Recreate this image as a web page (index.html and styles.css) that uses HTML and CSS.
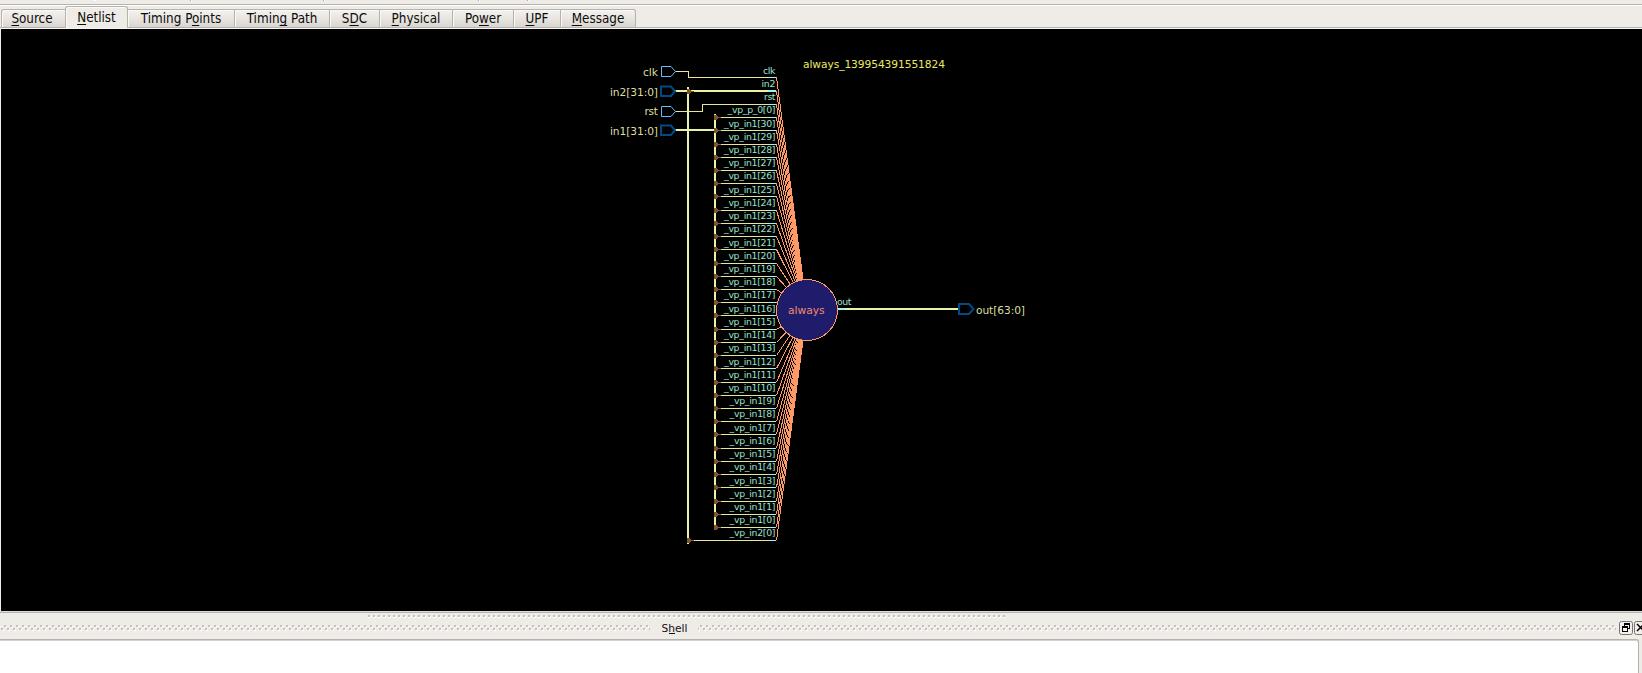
FILE: index.html
```
<!DOCTYPE html>
<html lang="en">
<head>
<meta charset="utf-8">
<title>Netlist</title>
<link rel="stylesheet" href="styles.css">
</head>
<body>
<div class="app">
  <div class="toolbar"><svg width="1642" height="6" shape-rendering="crispEdges"><path class="tick" d="M190.5 0v1M323.5 0v1M478.5 0v1M527.5 0v1"/><path class="lite" d="M94 .5h2M191.5 0v1M324.5 0v1M479.5 0v1M528.5 0v1"/></svg></div>
  <nav class="tabs">
    <div class="tab t-source"><span><u>S</u>ource</span></div>
    <div class="tab t-netlist active"><span><u>N</u>etlist</span></div>
    <div class="tab t-points"><span>Timing P<u>o</u>ints</span></div>
    <div class="tab t-path"><span>Timin<u>g</u> Path</span></div>
    <div class="tab t-sdc"><span>S<u>D</u>C</span></div>
    <div class="tab t-physical"><span><u>P</u>hysical</span></div>
    <div class="tab t-power"><span>Po<u>w</u>er</span></div>
    <div class="tab t-upf"><span><u>U</u>PF</span></div>
    <div class="tab t-message"><span><u>M</u>essage</span></div>
  </nav>
  <main class="canvas">
    <svg id="netlist" width="1641" height="582" viewBox="1 29 1641 582"></svg>
  </main>
  <div class="splitter">
    <svg width="1642" height="5" shape-rendering="crispEdges">
      <defs><pattern id="grip" width="5" height="5" patternUnits="userSpaceOnUse" x="368" y="1"><rect width="2" height="2" fill="#c4c1bc"/><path d="M0 2.5h2M2.5 1v2" stroke="#fff"/></pattern></defs>
      <rect x="368" y="1" width="637" height="4" fill="url(#grip)"/>
    </svg>
  </div>
  <header class="dock">
    <svg width="1642" height="20" shape-rendering="crispEdges">
      <defs><pattern id="zig" width="6" height="6" patternUnits="userSpaceOnUse" x="0" y="5"><rect x="4" y="0" width="2" height="2" fill="#c4c1bc"/><rect x="1" y="3" width="2" height="2" fill="#c4c1bc"/><path d="M5 2.5h1M0 1.5h1M2 5.5h2M3.5 4v1" stroke="#fff"/></pattern></defs>
      <rect x="0" y="5" width="650" height="6" fill="url(#zig)"/>
      <rect x="698" y="5" width="918" height="6" fill="url(#zig)"/>
      <text class="dock-title" x="661.5" y="12" textLength="26">S<tspan class="mnemonic">h</tspan>ell</text>
      <path d="M669 13.5h6" stroke="#111"/>
    </svg>
    <svg class="dock-buttons" width="24" height="15" viewBox="1618 620 24 15">
      <rect class="button" x="1619.5" y="621.5" width="13" height="13" rx="2"/>
      <rect class="button" x="1634.5" y="621.5" width="13" height="13" rx="2"/>
      <g shape-rendering="crispEdges" fill="none" stroke="#000"><path d="M1624.5 626v-2.500h5v5h-2M1624 624.500h6M1622.500 626.500h5v5h-5zM1622 627.500h6"/></g>
      <path d="M1637 624l7 7M1637 631l7-7" stroke="#000" stroke-width="1.5"/>
    </svg>
  </header>
  <section class="shell"></section>
</div>
<script src="netlist.js"></script>
</body>
</html>
```
FILE: styles.css
```
body { margin: 0; overflow: hidden; background: #efebe7; }
.app { display: flex; flex-direction: column; width: 1642px; height: 673px; overflow: hidden; }
svg { display: block; }
.toolbar { height: 4px; border-bottom: 1px solid #b5b2ae; box-shadow: 0 1px #fff; }
.tick { stroke: #aaa6a2; }
.lite { stroke: #fff; }
.tabs {
  display: flex; align-items: flex-end; height: 22px; padding-left: 1px; margin-top: 0;
  border-bottom: 1px solid #b5b2ae;
  font: 13.33px "DejaVu Sans Condensed", "DejaVu Sans", sans-serif;
  font-stretch: condensed; color: #0c0c0c;
}
.tab {
  box-sizing: border-box; height: 18px; display: flex; justify-content: center; align-items: center;
  border-top: 1px solid #b5b2ae; border-right: 1px solid #b5b2ae;
  background: linear-gradient(#f4f2ef, #eae7e3 45%, #d9d5d0);
  box-shadow: inset 1px 1px #faf9f8; white-space: nowrap; line-height: 16px;
}
.tab u { text-decoration-thickness: 1px; text-underline-offset: 2px; text-decoration-skip-ink: none; }
.active {
  height: 22px; margin-bottom: -1px; border-left: 1px solid #b5b2ae;
  border-radius: 3px 3px 0 0; background: #efebe7; padding: 2px 0 1px;
}
.t-source { width: 64px; border-left: 1px solid #b5b2ae; border-right: 0; border-radius: 3px 0 0 0; padding-right: 3px; }
.t-netlist { width: 63px; }
.t-points { width: 107px; }
.t-path { width: 95px; }
.t-sdc { width: 50px; }
.t-physical { width: 73px; }
.t-power { width: 61px; }
.t-upf { width: 47px; }
.t-message { width: 75px; border-radius: 0 3px 0 0; }
.canvas { height: 582px; margin-left: 1px; border-top: 1px solid #f8f6f4; background: #000; }
.splitter { height: 6px; border-top: 1px solid #dedbd7; box-shadow: inset 0 1px #b5b2ae; padding-top: 2px; }
.dock { display: flex; height: 19px; }
.dock-title { font: 10.67px "DejaVu Sans", sans-serif; fill: #111; }
.dock-buttons { margin-left: -24px; flex: none; }
.button { fill: #f1eeeb; stroke: #77736f; }
.shell { flex: 1; margin-right: 3px; border-top: 1px solid #b5b2ae; border-right: 1px solid #b5b2ae; box-shadow: inset 0 1px #d5d2ce; background: #fff; border-radius: 0 3px 0 0; }
#netlist text { font-family: "DejaVu Sans", sans-serif; }
#netlist .pin { font-size: 9.33px; fill: #9ce2cd; }
#netlist .port { font-size: 10.67px; fill: #dede9f; }
#netlist .title { font-size: 10.67px; fill: #eaea66; }
#netlist .block { font-size: 10.67px; fill: #f08c6c; }
.wire { fill: none; stroke: #e6e696; }
.bus { fill: none; stroke: #eaf2aa; stroke-width: 2; }
.stub { stroke: #a0f4f0; }
.wide { stroke-width: 2; }
.fan { stroke: #ff9966; }
.circle { fill: #1f1c6b; stroke: #ff9966; }
.tap { fill: #7e5436; }
.port-in { fill: #000; stroke: #6cb8fa; }
.port-bus { fill: #000; stroke: #004a85; stroke-width: 2; }
```
FILE: netlist.js
```
const NS = "http://www.w3.org/2000/svg";
const root = document.getElementById("netlist");

function add(tag, attrs, text) {
  const el = document.createElementNS(NS, tag);
  for (const k in attrs) el.setAttribute(k, attrs[k]);
  if (text) el.textContent = text;
  root.appendChild(el);
}
function line(cls, d) {
  add("path", { class: cls, d: d, "shape-rendering": "crispEdges" });
}
function label(cls, x, y, text, anchor, len) {
  const a = { class: cls, x: x, y: y, "text-anchor": anchor };
  if (len) { a.textLength = len; a.lengthAdjust = "spacing"; }
  add("text", a, text);
}

// Pin rows, top to bottom
const rows = [77, 91, 104, 117, 130, 144, 157, 170, 183, 196, 210, 223, 236, 249, 263, 276, 289, 302,
  315, 329, 342, 355, 368, 382, 395, 408, 421, 434, 448, 461, 474, 487, 501, 514, 527, 540];
const names = ["clk", "in2", "rst", "_vp_p_0[0]"];
for (let b = 30; b >= 0; b--) names.push("_vp_in1[" + b + "]");
names.push("_vp_in2[0]");

// Fan-in to the process block
rows.forEach(y => line("fan", "M776.5 " + (y + 0.5) + "L807 310"));

// Nets
line("wire", "M675 71.5H688.5V77.5H768");
line("wire", "M675 111.5H702.5V104.5H768");
line("bus", "M675 91H768M675 130H715M688 87V544M715 114V530");
line("bus", "M845 309H959");

rows.forEach((y, i) => {
  if (i > 2) line("wire", "M" + (i === 35 ? 689 : 716) + " " + (y + 0.5) + "H768");
  if (i === 1) line("stub wide", "M768 91H776");
  else line("stub", "M768 " + (y + 0.5) + "H776");
  if (i > 2) {
    const x = i === 35 ? 687 : 714;
    line("tap", "M" + x + " " + (y - 2) + "h2l3 2h2v1h-2l-3 2h-2z");
  }
  const gap = i < 35 && rows[i + 1] - y === 14 ? 3 : 4;
  const n = names[i];
  const len = n.length === 11 ? 51.5 : n.length === 10 ? (i === 3 ? 48 : 46) : (i === 1 ? 14 : i === 0 ? 12.5 : 11.5);
  label("pin", 775.5, y - gap, n, "end", len);
});
line("tap", "M687 89h2l3 2h2v1h-2l-3 2h-2z");

add("circle", { class: "circle", cx: 807, cy: 310, r: 30.5, "shape-rendering": "crispEdges" });
line("stub wide", "M838 309H845");
label("block", 788, 314, "always", "start", 36.5);
label("pin", 837, 305, "out", "start", 14.5);

// Ports
add("path", { class: "port-in", d: "M661.500 66.500h9.500l4.500 5-4.500 5h-9.500z" });
add("path", { class: "port-in", d: "M661.500 106.500h9.500l4.500 5-4.500 5h-9.500z" });
add("path", { class: "port-bus", d: "M661 86.500h10l4 4.750-4 4.750h-10z" });
add("path", { class: "port-bus", d: "M661 125.500h10l4 4.750-4 4.750h-10z" });
add("path", { class: "port-bus", d: "M959 304h10l4.500 5-4.500 5h-10z" });
label("port", 658, 76, "clk", "end", 15);
label("port", 658, 96, "in2[31:0]", "end", 48);
label("port", 658, 115, "rst", "end", 13.5);
label("port", 658, 135, "in1[31:0]", "end", 48);
label("port", 976, 314, "out[63:0]", "start", 49);
label("title", 803, 68, "always_139954391551824", "start", 142);
```
